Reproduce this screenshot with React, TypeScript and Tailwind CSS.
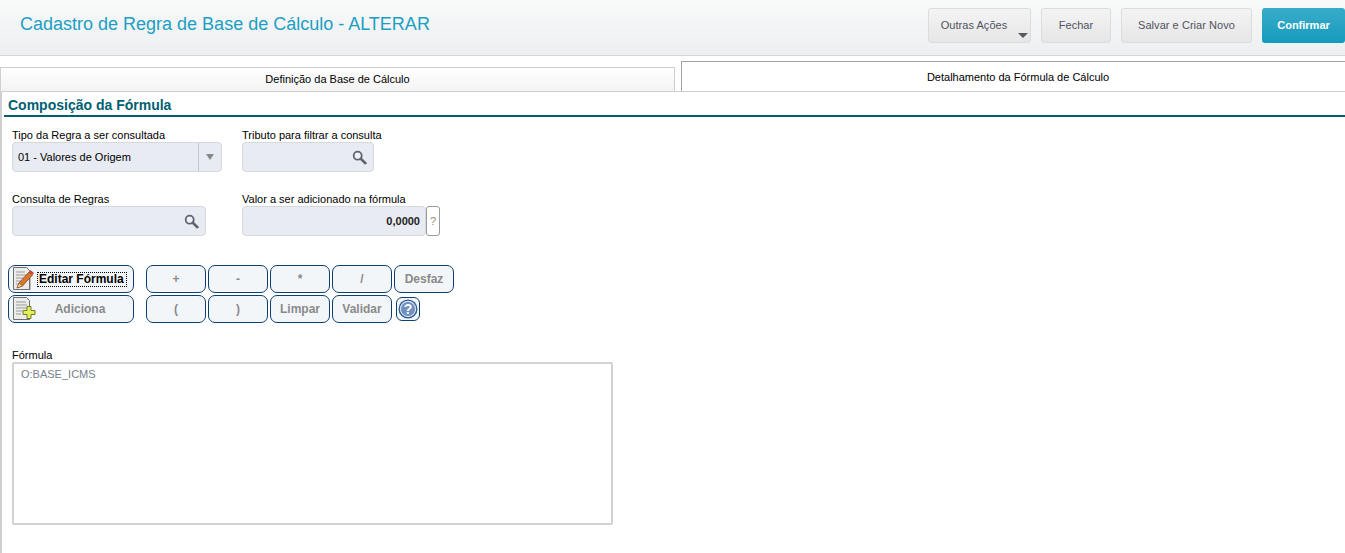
import React from 'react';

const SearchIcon = () => (
  <svg width="15" height="15" viewBox="0 0 15 15" fill="none">
    <circle cx="5.7" cy="5.7" r="4" stroke="#5f6470" strokeWidth="1.8" fill="#eef0f4" />
    <path d="M8.8 8.8l4.6 4.4" stroke="#5f6470" strokeWidth="2.6" strokeLinecap="round" />
  </svg>
);

const EditIcon = () => (
  <svg width="24" height="26" viewBox="0 0 24 26">
    <path d="M5 4h15v20H5z" fill="#8f8f8f" opacity="0.55" />
    <path d="M2.5 1.5h13l3 3v19h-16z" fill="#ececea" stroke="#6f6f72" />
    <path d="M5 6h9M5 9h11M5 12h9M5 15h6M5 18h5" stroke="#9a9a9a" />
    <path d="M6 22l2-5L18 6l3.5 3L11.5 20z" fill="#d9772c" stroke="#8c4a1e" strokeWidth="0.8" />
    <path d="M18 6l1.8-1.8 3.2 2.8L21.5 9z" fill="#c94b3c" />
    <path d="M6 22l2-5 3.5 3z" fill="#f1d6a8" stroke="#8c4a1e" strokeWidth="0.6" />
  </svg>
);

const AddIcon = () => (
  <svg width="26" height="26" viewBox="0 0 26 26">
    <path d="M4 4h15v20H4z" fill="#8f8f8f" opacity="0.55" />
    <path d="M2.5 1.5h13l3 3v19h-16z" fill="#ececea" stroke="#6f6f72" />
    <path d="M5 6h10M5 9h11M5 12h11M5 15h6M5 18h5" stroke="#9a9a9a" />
    <path d="M16 10.5h4v4h4v4h-4v4h-4v-4h-4v-4h4z" fill="#e4ee5a" stroke="#6f7d2a" />
  </svg>
);

const HelpIcon = () => (
  <svg width="20" height="20" viewBox="0 0 20 20">
    <circle cx="10" cy="10" r="9.5" fill="#2f5b93" />
    <circle cx="10" cy="10" r="7.6" fill="#6f90c0" stroke="#d5e0ef" strokeWidth="1.2" />
    <text x="10" y="15" textAnchor="middle" fontSize="14" fontWeight="700" fill="#ffffff" fontFamily="Liberation Sans">?</text>
  </svg>
);

function OpButton({ label }: { label: string }) {
  return (
    <button className="h-7 w-[60px] rounded-[7px] border border-[#0f3f6e] bg-[#f3f6f9] text-[12px] font-bold text-[#8a8a8a]">
      {label}
    </button>
  );
}

function Field({ label, width, children }: { label: string; width: string; children: React.ReactNode }) {
  return (
    <div className={`flex flex-col ${width}`}>
      <label className="h-[14px] text-[11px] leading-[14px] whitespace-nowrap text-black">{label}</label>
      {children}
    </div>
  );
}

const grayButton =
  'h-[35px] rounded-[3px] border border-[#dcdcdc] bg-gradient-to-b from-[#f4f4f4] to-[#e6e6e6] text-[11px] tracking-[0.05px] text-[#50535f]';

export default function App() {
  return (
    <div className="h-[553px] overflow-hidden bg-white font-['Liberation_Sans',Arial,sans-serif]">
      {/* Header */}
      <header className="flex h-14 items-start justify-between border-b border-[#d6d6d6] bg-gradient-to-b from-[#f8f9f9] to-[#eeeff1]">
        <h1 className="mt-[12px] ml-5 text-[18px] leading-6 text-[#1b9fc4]">
          Cadastro de Regra de Base de Cálculo - ALTERAR
        </h1>
        <div className="mt-2 flex gap-[10px]">
          <button className={`relative w-[103px] pr-[11px] ${grayButton}`}>
            Outras Ações
            <span className="absolute right-[2px] bottom-[4px] h-0 w-0 border-x-[5px] border-t-[5px] border-x-transparent border-t-[#55585f]" />
          </button>
          <button className={`w-[70px] ${grayButton}`}>Fechar</button>
          <button className={`w-[131px] ${grayButton}`}>Salvar e Criar Novo</button>
          <button className="h-[35px] w-[83px] rounded-[3px] bg-gradient-to-b from-[#38abc9] to-[#119bbd] text-[11px] font-bold text-white">
            Confirmar
          </button>
        </div>
      </header>

      {/* Tabs */}
      <div className="mt-[5px] flex h-[30px] items-end justify-between">
        <div className="flex h-6 w-[675px] items-center justify-center border border-b-0 border-[#cfcfcf] bg-gradient-to-b from-white to-[#f3f3f3] text-[11px] text-black">
          Definição da Base de Cálculo
        </div>
        <div className="flex h-[30px] w-[664px] items-center justify-center border-t border-l border-[#a3a3a3] bg-white pt-[2px] pl-[9px] text-[11px] text-black">
          Detalhamento da Fórmula de Cálculo
        </div>
      </div>

      {/* Panel */}
      <main className="h-[462px] border-t border-l-[2px] border-[#cfcfcf] pt-[5px] pl-[2px]">
        <h2 className="h-5 border-b-[2px] border-[#006073] pl-1 text-[14px] leading-[16px] font-bold text-[#006073]">
          Composição da Fórmula
        </h2>

        <div className="pt-[11px] pl-2">
          <div className="flex gap-5">
            <Field label="Tipo da Regra a ser consultada" width="w-[210px]">
              <div className="flex h-[30px] items-center rounded-[4px] border border-[#d5d8de] bg-[#e8ebf2]">
                <span className="flex-1 pl-[5px] text-[11px] text-black">01 - Valores de Origem</span>
                <span className="flex h-full w-[23px] items-center justify-center border-l border-[#c2c5cb]">
                  <span className="h-0 w-0 border-x-[4px] border-t-[6px] border-x-transparent border-t-[#85878d]" />
                </span>
              </div>
            </Field>
            <Field label="Tributo para filtrar a consulta" width="w-[132px]">
              <div className="flex h-[30px] items-center justify-end rounded-[4px] border border-[#d5d8de] bg-[#e8ebf2] pr-[6px]">
                <SearchIcon />
              </div>
            </Field>
          </div>

          <div className="mt-5 flex gap-9">
            <Field label="Consulta de Regras" width="w-[194px]">
              <div className="flex h-[30px] items-center justify-end rounded-[4px] border border-[#d5d8de] bg-[#e8ebf2] pr-[6px]">
                <SearchIcon />
              </div>
            </Field>
            <Field label="Valor a ser adicionado na fórmula" width="w-[198px]">
              <div className="flex">
                <div className="flex h-[30px] w-[184px] items-center justify-end rounded-[4px] border border-[#d5d8de] bg-[#e8ebf2] pr-[5px] text-[11px] font-bold text-[#222222]">
                  0,0000
                </div>
                <button className="h-[30px] w-[14px] rounded-[3px] border border-[#9a9a9a] bg-white text-[11px] text-[#a08a70]">?</button>
              </div>
            </Field>
          </div>
        </div>

        {/* Formula buttons */}
        <div className="mt-[29px] flex flex-col gap-[2px] pl-1">
          <div className="flex items-center">
            <button className="flex h-7 w-[126px] items-center rounded-[7px] border border-[#0f3f6e] bg-[#f3f6f9] pl-[2px] text-[12px] font-bold text-black">
              <EditIcon />
              <span className="ml-[2px] border border-dotted border-black pr-[2px] pl-[1px] leading-[13px]">Editar Fórmula</span>
            </button>
            <div className="ml-3 flex gap-[2px]">
              <OpButton label="+" />
              <OpButton label="-" />
              <OpButton label="*" />
              <OpButton label="/" />
              <OpButton label="Desfaz" />
            </div>
          </div>
          <div className="flex items-center">
            <button className="flex h-7 w-[126px] items-center rounded-[7px] border border-[#0f3f6e] bg-[#f3f6f9] pl-[2px] text-[12px] font-bold text-[#8a8a8a]">
              <AddIcon />
              <span className="flex-1 pr-[10px] text-center">Adiciona</span>
            </button>
            <div className="ml-3 flex gap-[2px]">
              <OpButton label="(" />
              <OpButton label=")" />
              <OpButton label="Limpar" />
              <OpButton label="Validar" />
            </div>
            <button className="ml-1 flex h-6 w-6 items-center justify-center rounded-[6px] border border-[#0f3f6e] bg-[#f3f6f9]">
              <HelpIcon />
            </button>
          </div>
        </div>

        <div className="mt-[26px] pl-2">
          <label className="block h-[13px] text-[11px] leading-[13px] text-black">Fórmula</label>
          <div className="h-[163px] w-[601px] rounded-[2px] border-[2px] border-[#d2d2d2] bg-white px-[7px] py-[2px] text-[11px] text-[#77808c]">
            O:BASE_ICMS
          </div>
        </div>
      </main>
    </div>
  );
}
